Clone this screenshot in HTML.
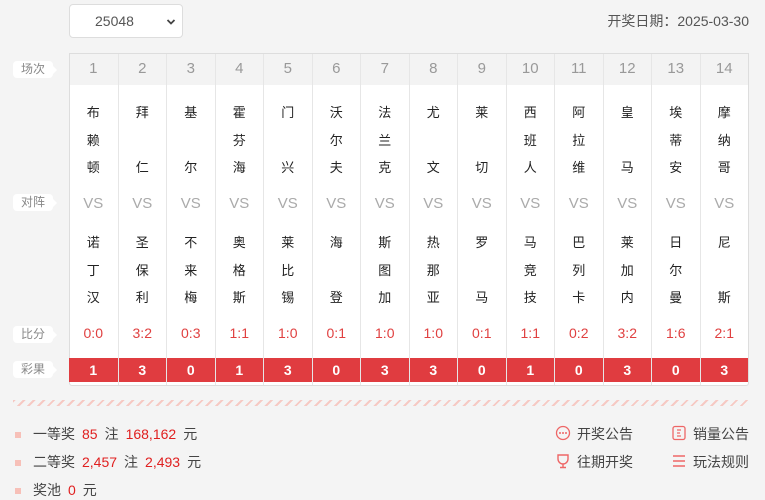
<!DOCTYPE html>
<html><head><meta charset="utf-8"><style>
*{margin:0;padding:0;box-sizing:border-box}
body{width:765px;height:499px;background:#f4f4f4;font-family:"Liberation Sans","Noto Sans CJK SC",sans-serif;position:relative;overflow:hidden;color:#333}
.abs{position:absolute}
.sel{left:69px;top:4px;width:114px;height:34px;background:#fff;border:1px solid #ddd;border-radius:4px;font-size:14px;color:#555;line-height:32px;padding-left:25px}
.date{right:16px;top:11px;font-size:14px;color:#555}
.tbl{left:69px;top:53px;width:680px;height:333px;background:#fff;border:1px solid #ddd;border-radius:0 0 3px 3px}
.hdr{left:70px;top:54px;width:678px;height:31px;background:#f3f3f3}
.col{position:absolute;top:54px;width:48.5px;height:331px;border-left:1px solid #e6e6e6}
.col div{position:absolute;left:0;width:100%;text-align:center}
.n{top:6px;font-size:15px;color:#999}
.c{font-size:13px;color:#222}
.vs{top:141px;font-size:15px;color:#aaa}
.sc{top:271px;font-size:14px;color:#e04040}
.rs{top:304px;height:24px;background:#e03c40;color:#fff;font-weight:bold;font-size:14px;line-height:24px}
.lab{left:13px;width:40px;height:17px;background:#fff;border-radius:4px;font-size:12px;color:#888;text-align:center;line-height:17px}
.lab:after{content:"";position:absolute;right:-4px;top:5px;border-left:4px solid #fff;border-top:4px solid transparent;border-bottom:4px solid transparent}
.stripe{left:13px;top:400px;width:736px;height:6px;background:repeating-linear-gradient(135deg,#f6c9c3 0 2px,transparent 2px 7px)}
.pr{left:15px;font-size:14px;color:#444;word-spacing:0}
.pr i{display:inline-block;width:6px;height:6px;background:#f7c0b8;margin-right:12px;vertical-align:middle}
.pr b{font-weight:normal;color:#e02020}
.pr span{margin-left:7px}
.lk{font-size:14px;color:#444}
</style></head><body>
<div class="abs sel">25048<svg style="position:absolute;right:6px;top:13px" width="10" height="8"><path d="M1.5 2l3.5 3.5 3.5-3.5" fill="none" stroke="#444" stroke-width="1.8"/></svg></div>
<div class="abs date">开奖日期：2025-03-30</div>
<div class="abs tbl"></div>
<div class="abs hdr"></div>
<div class="abs lab" style="top:61px">场次</div>
<div class="abs lab" style="top:194px">对阵</div>
<div class="abs lab" style="top:326px">比分</div>
<div class="abs lab" style="top:361px">彩果</div>
<div id="cols"></div>
<div class="abs stripe"></div>
<div class="abs pr" style="top:424px"><i></i>一等奖<span><b>85</b></span><span>注</span><span><b>168,162</b></span><span>元</span></div>
<div class="abs pr" style="top:452px"><i></i>二等奖<span><b>2,457</b></span><span>注</span><span><b>2,493</b></span><span>元</span></div>
<div class="abs pr" style="top:480px"><i></i>奖池<span><b>0</b></span><span>元</span></div>
<svg class="abs" style="left:555px;top:425px" width="16" height="16"><circle cx="8" cy="8" r="6.5" fill="none" stroke="#e66" stroke-width="1.3"/><circle cx="5" cy="8" r="1" fill="#e66"/><circle cx="8" cy="8" r="1" fill="#e66"/><circle cx="11" cy="8" r="1" fill="#e66"/></svg>
<div class="abs lk" style="left:577px;top:424px">开奖公告</div>
<svg class="abs" style="left:671px;top:425px" width="16" height="16"><rect x="2" y="1.5" width="12" height="13" rx="2" fill="none" stroke="#e66" stroke-width="1.3"/><path d="M6 5h4M6 8h3M6 11h4" stroke="#e66" stroke-width="1.2"/></svg>
<div class="abs lk" style="left:693px;top:424px">销量公告</div>
<svg class="abs" style="left:555px;top:453px" width="16" height="16"><path d="M3 2h10v4a5 5 0 0 1-10 0z M8 11v3 M5 14.5h6" fill="none" stroke="#e66" stroke-width="1.4"/></svg>
<div class="abs lk" style="left:577px;top:452px">往期开奖</div>
<svg class="abs" style="left:671px;top:453px" width="16" height="16"><path d="M2 3h12M2 8h12M2 13h12" stroke="#e66" stroke-width="1.4"/></svg>
<div class="abs lk" style="left:693px;top:452px">玩法规则</div>
<script>
var h=[["布","赖","顿"],["拜","","仁"],["基","","尔"],["霍","芬","海"],["门","","兴"],["沃","尔","夫"],["法","兰","克"],["尤","","文"],["莱","","切"],["西","班","人"],["阿","拉","维"],["皇","","马"],["埃","蒂","安"],["摩","纳","哥"]];
var a=[["诺","丁","汉"],["圣","保","利"],["不","来","梅"],["奥","格","斯"],["莱","比","锡"],["海","","登"],["斯","图","加"],["热","那","亚"],["罗","","马"],["马","竞","技"],["巴","列","卡"],["莱","加","内"],["日","尔","曼"],["尼","","斯"]];
var s=["0:0","3:2","0:3","1:1","1:0","0:1","1:0","1:0","0:1","1:1","0:2","3:2","1:6","2:1"];
var r=[1,3,0,1,3,0,3,3,0,1,0,3,0,3];
var o="";
for(var i=0;i<14;i++){var x=69+48.5*i;var c='<div class="col" style="left:'+x+'px;'+(i==0?'border-left:none':'')+'"><div class="n">'+(i+1)+'</div>';
for(var k=0;k<3;k++){c+='<div class="c" style="top:'+(48+k*27.5)+'px">'+h[i][k]+'</div>';c+='<div class="c" style="top:'+(178+k*27.5)+'px">'+a[i][k]+'</div>';}
c+='<div class="vs">VS</div><div class="sc">'+s[i]+'</div><div class="rs">'+r[i]+'</div></div>';o+=c;}
document.getElementById("cols").innerHTML=o;
</script>
</body></html>
